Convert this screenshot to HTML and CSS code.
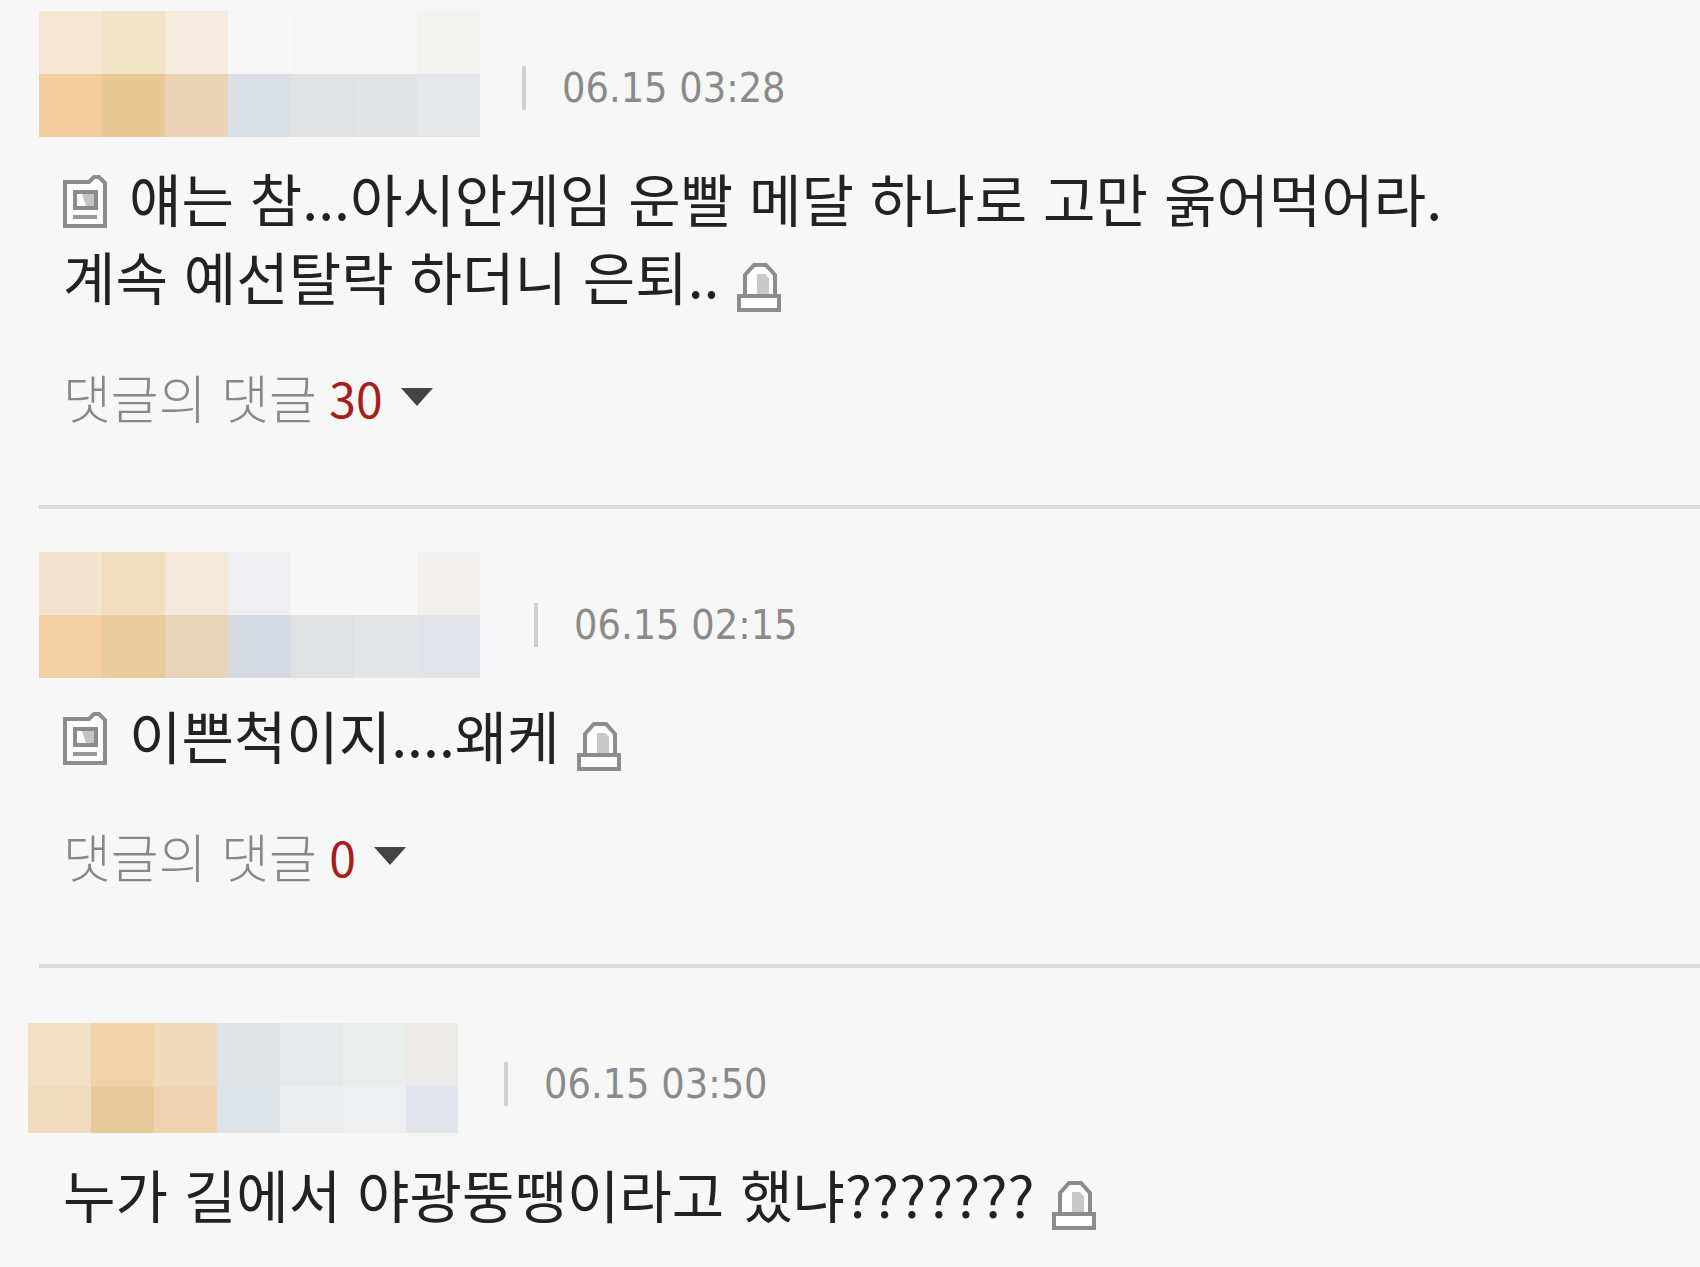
FILE: index.html
```html
<!DOCTYPE html>
<html lang="ko">
    <head>
        <meta charset="utf-8">
        <title>댓글</title>
        <link rel="stylesheet" href="styles.css">
    </head>
    <body>
        <svg class="defs" width="0" height="0">
            <symbol id="doc" viewBox="0 0 44 53">
                <path d="M2 7H26L31 2H36L42 8V51H2Z" fill="#fdfdfd" stroke="#8c8c8c" stroke-width="4"/>
                <rect x="12" y="17" width="21" height="16" fill="#fff" stroke="#8c8c8c" stroke-width="4"/>
                <path d="M19 19H31V31H23Z" fill="#c4c4c4"/>
                <path d="M10 42H34" stroke="#999" stroke-width="4"/>
            </symbol>
            <symbol id="siren" viewBox="0 0 44 49">
                <path d="M8 33V12L17 2H29L38 12V33" fill="#fdfdfd" stroke="#8c8c8c" stroke-width="4"/>
                <path d="M20 11H28L32 15V31H20Z" fill="#c8c8c8"/>
                <rect x="2" y="33" width="40" height="14" fill="#fff" stroke="#8c8c8c" stroke-width="4"/>
            </symbol>
        </svg>

        <ul class="comments">
            <li class="comment">
                <div class="head">
                    <div class="name name-a">
                        <i style="background:#f5e7d4"></i><i style="background:#f3e3c9"></i><i style="background:#f5ebdf"></i><i style="background:#f7f7f7"></i><i style="background:#f6f6f6"></i><i style="background:#f6f6f6"></i><i style="background:#f2f2ef"></i>
                        <i style="background:#f3cd9e"></i><i style="background:#e8c894"></i><i style="background:#ecd2b5"></i><i style="background:#dadee5"></i><i style="background:#dee2e5"></i><i style="background:#dfe3e6"></i><i style="background:#e5e7eb"></i>
                    </div>
                    <span class="date">06.15 03:28</span>
                </div>
                <p class="text"><svg class="doc"><use href="#doc"/></svg>얘는 참...아시안게임 운빨 메달 하나로 고만 욹어먹어라.<br>계속 예선탈락 하더니 은퇴..<button class="report" aria-label="신고"><svg><use href="#siren"/></svg></button></p>
                <button class="reply">댓글의 댓글 <span class="count">30</span><svg class="arrow" viewBox="0 0 32 18"><path d="M0 0H32L16 18Z"/></svg></button>
            </li>
            <li class="comment">
                <div class="head">
                    <div class="name name-b">
                        <i style="background:#f3e5cd"></i><i style="background:#f1debf"></i><i style="background:#f4e8da"></i><i style="background:#efeff1"></i><i style="background:#f7f7f7"></i><i style="background:#f7f7f7"></i><i style="background:#f2f0ec"></i><i></i>
                        <i style="background:#f3d1a5"></i><i style="background:#eacb9b"></i><i style="background:#e8d5b9"></i><i style="background:#d5d9e2"></i><i style="background:#dee2e5"></i><i style="background:#e2e6e6"></i><i style="background:#e0e4e8"></i><i style="background:#f4f6f9"></i>
                    </div>
                    <span class="date">06.15 02:15</span>
                </div>
                <p class="text"><svg class="doc"><use href="#doc"/></svg>이쁜척이지....왜케<button class="report" aria-label="신고"><svg><use href="#siren"/></svg></button></p>
                <button class="reply">댓글의 댓글 <span class="count">0</span><svg class="arrow" viewBox="0 0 32 18"><path d="M0 0H32L16 18Z"/></svg></button>
            </li>
            <li class="comment">
                <div class="head">
                    <div class="name name-c">
                        <i style="background:#f3dfc5"></i><i style="background:#f0d3a7"></i><i style="background:#f2d8bc"></i><i style="background:#dfe3e6"></i><i style="background:#e7e8ea"></i><i style="background:#ebeded"></i><i style="background:#ebeae6"></i>
                        <i style="background:#f2dabc"></i><i style="background:#e7c99a"></i><i style="background:#eed3ae"></i><i style="background:#dde2e6"></i><i style="background:#ebecee"></i><i style="background:#eeeff1"></i><i style="background:#e1e5eb"></i>
                    </div>
                    <span class="date">06.15 03:50</span>
                </div>
                <p class="text">누가 길에서 야광뚱땡이라고 했냐???????<button class="report" aria-label="신고"><svg><use href="#siren"/></svg></button></p>
            </li>
        </ul>
    </body>
</html>
```
FILE: styles.css
```css
body{
    margin: 0;
    background-color: #f7f7f7;
    color: #222;
    font-family: "Noto Sans CJK KR", sans-serif;
}

.defs{
    position: absolute;
}

.comments{
    margin: 0;
    padding: 0 0 0 39px;
    list-style: none;
}

.comment{
    padding: 43px 0 78px;
    border-bottom: 4px solid #dadada;
}

.comment:first-child{
    padding-top: 15px;
}

.comment:last-child{
    padding-bottom: 32px;
    border-bottom: 0;
}

/* writer name and date */
.head{
    display: flex;
    align-items: flex-start;
    gap: 42px;
    height: 143px;
}

.name{
    display: grid;
    grid-template-columns: repeat(7, 63px);
    grid-template-rows: 63px 63px;
}

.name-a{
    margin-top: -4px;
}

.name-b{
    grid-template-columns: repeat(7, 63px) 12px;
}

.name-c{
    grid-template-columns: repeat(6, 63px) 52px;
    grid-template-rows: 63px 47px;
    margin: 12px 4px 0 -11px;
}

.date{
    margin-top: 51px;
    padding-left: 36px;
    border-left: 4px solid #d0d0d0;
    color: #8a8a8a;
    font-family: "DejaVu Sans Condensed", "DejaVu Sans", sans-serif;
    font-stretch: condensed;
    font-size: 41px;
    line-height: 44px;
}

.text{
    margin: 0;
    padding-left: 24px;
    font-size: 57px;
    line-height: 78px;
}

.doc{
    width: 44px;
    height: 53px;
    margin-right: 22px;
    vertical-align: -6px;
}

.report{
    margin: 0 0 0 17px;
    padding: 0;
    border: 0;
    background: none;
    vertical-align: -12px;
    line-height: 0;
    cursor: pointer;
}

.report svg{
    width: 44px;
    height: 49px;
}

/* replies toggle */
.reply{
    display: flex;
    align-items: center;
    margin: 53px 0 0 24px;
    padding: 0;
    border: 0;
    background: none;
    color: #888;
    font-family: inherit;
    font-size: 52px;
    font-weight: 300;
    line-height: 60px;
    white-space: pre;
    cursor: pointer;
}

.count{
    margin-left: -2px;
    color: #a81c1c;
    font-size: 48px;
    font-weight: 400;
    line-height: 56px;
}

.arrow{
    width: 32px;
    height: 18px;
    margin-left: 18px;
    fill: #444;
}
```
